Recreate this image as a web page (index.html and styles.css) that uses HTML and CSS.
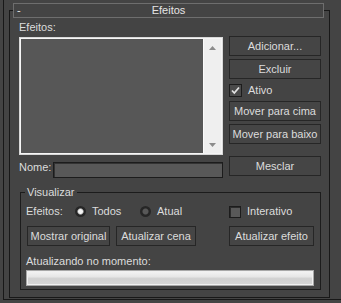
FILE: index.html
```html
<!DOCTYPE html>
<html lang="pt">
<head>
<meta charset="utf-8">
<title>Efeitos</title>
<link rel="stylesheet" href="styles.css">
</head>
<body>
<div class="panel">
  <div class="rollout">
    <div class="titlebar">
      <span class="collapse">-</span>
      <span class="title">Efeitos</span>
      <span></span>
    </div>

    <div class="top">
      <div class="left-col">
        <div class="text efeitos-label">Efeitos:</div>
        <div class="listbox">
          <div class="list-area"></div>
          <div class="scroll">
            <svg class="arrow" width="7" height="4" viewBox="0 0 7 4"><path d="M3.5 0 L7 4 L0 4 Z" fill="#8c8c8c"/></svg>
            <svg class="arrow" width="7" height="4" viewBox="0 0 7 4"><path d="M0 0 L7 0 L3.5 4 Z" fill="#8c8c8c"/></svg>
          </div>
        </div>
      </div>
      <div class="right-col">
        <div class="btn">Adicionar...</div>
        <div class="btn">Excluir</div>
        <div class="check-row">
          <span class="checkbox">
            <svg width="11" height="11" viewBox="0 0 11 11"><path d="M2 5.5 L4.3 8 L9 2.5" fill="none" stroke="#e2e2e2" stroke-width="1.8"/></svg>
          </span>
          <span class="text">Ativo</span>
        </div>
        <div class="btn">Mover para cima</div>
        <div class="btn">Mover para baixo</div>
      </div>
    </div>

    <div class="name-row">
      <div class="name-field">
        <span class="text name-label">Nome:</span>
        <span class="input"></span>
      </div>
      <div class="btn mesclar">Mesclar</div>
    </div>

    <div class="group">
      <div class="group-title">Visualizar</div>
      <div class="radio-row">
        <span class="text r-label">Efeitos:</span>
        <span class="radio-item todos"><span class="radio on"></span><span class="text">Todos</span></span>
        <span class="radio-item atual"><span class="radio"></span><span class="text">Atual</span></span>
        <span class="check-item"><span class="checkbox empty"></span><span class="text">Interativo</span></span>
      </div>
      <div class="btn-row">
        <div class="btn b-mostrar">Mostrar original</div>
        <div class="btn b-cena">Atualizar cena</div>
        <div class="btn b-efeito">Atualizar efeito</div>
      </div>
      <div class="text status">Atualizando no momento:</div>
      <div class="progress"></div>
    </div>
  </div>
</div>
</body>
</html>
```

FILE: styles.css
```css
html, body {
  margin: 0;
  padding: 0;
}

body {
  width: 341px;
  height: 303px;
  overflow: hidden;
  background: #444444;
  color: #dcdcdc;
  font-family: "Liberation Sans", Arial, sans-serif;
  font-size: 11px;
  line-height: 13px;
}

.panel {
  box-sizing: border-box;
  margin-left: 3px;
  height: 300px;
  padding-top: 10px;
  border-left: 1px solid #181818;
  border-bottom: 1px solid #181818;
}

.rollout {
  box-sizing: border-box;
  margin-left: 5px;
  width: 321px;
  height: 288px;
  border: 1px solid #181818;
  padding: 0 8px 0 9px;
}

.titlebar {
  box-sizing: border-box;
  margin: -8px 0 0 -6px;
  width: 311px;
  height: 15px;
  border: 1px solid #6e6e6e;
  background: #444444;
  display: grid;
  grid-template-columns: 1fr auto 1fr;
  color: #e4e4e4;
}

.collapse {
  padding-left: 3px;
}

.top {
  display: flex;
  gap: 6px;
}

.left-col {
  width: 204px;
}

.efeitos-label {
  margin-top: 3px;
}

.listbox {
  box-sizing: border-box;
  margin-top: 3px;
  height: 118px;
  display: flex;
  border: 1px solid #d8d8d8;
  box-shadow: inset 0 0 0 1px #f6f6f6;
  padding: 1px;
}

.list-area {
  flex: 1;
  background: #575757;
}

.scroll {
  width: 17px;
  background: #efefef;
  border-left: 1px solid #fafafa;
  display: flex;
  flex-direction: column;
  justify-content: space-between;
  align-items: center;
  padding: 7px 0 6px;
}

.arrow {
  display: block;
}

.right-col {
  width: 92px;
  margin-top: 18px;
  display: flex;
  flex-direction: column;
  gap: 3px;
}

.btn {
  box-sizing: border-box;
  height: 20px;
  border: 1px solid #262626;
  background: #454545;
  display: flex;
  align-items: center;
  justify-content: center;
  white-space: nowrap;
}

.check-row {
  height: 16px;
  display: flex;
  align-items: center;
  gap: 6px;
}

.checkbox {
  box-sizing: border-box;
  width: 13px;
  height: 13px;
  border: 1px solid #1c1c1c;
  background: #4a4a4a;
  display: flex;
  align-items: center;
  justify-content: center;
}

.checkbox svg {
  display: block;
}

.checkbox.empty {
  width: 12px;
  height: 12px;
  background: #595959;
  box-shadow: inset 1px 1px 0 #2c2c2c;
}

.name-row {
  display: flex;
  gap: 6px;
}

.name-field {
  width: 204px;
  margin-top: 7px;
  display: flex;
  align-items: flex-start;
}

.name-label {
  width: 34px;
  margin-top: -1px;
}

.input {
  box-sizing: border-box;
  flex: 1;
  height: 16px;
  border: 1px solid #1c1c1c;
  background: #585858;
  box-shadow: inset 1px 1px 0 #333333;
}

.mesclar {
  width: 92px;
  margin-top: 1px;
}

.group {
  box-sizing: border-box;
  margin: 14px 0 0 1px;
  width: 301px;
  border: 1px solid #1c1c1c;
  padding: 0 6px 3px 5px;
}

.group-title {
  width: max-content;
  margin: -7px 0 0 -1px;
  padding: 0 2px;
  background: #444444;
}

.radio-row {
  height: 13px;
  margin-top: 6px;
  display: flex;
  align-items: center;
}

.r-label {
  width: 49px;
}

.radio-item {
  display: flex;
  align-items: center;
  gap: 6px;
}

.todos {
  width: 65px;
}

.atual {
  width: 89px;
}

.radio {
  width: 11px;
  height: 11px;
  border-radius: 50%;
  background: radial-gradient(circle, #585858 0 2.5px, #262626 3.5px);
}

.radio.on {
  background: radial-gradient(circle, #f2f2f2 0 2px, #9a9a9a 2.8px, #262626 3.6px);
}

.check-item {
  display: flex;
  align-items: center;
  gap: 6px;
}

.btn-row {
  margin-top: 8px;
  display: flex;
  gap: 6px;
}

.b-mostrar {
  width: 83px;
  margin-left: 1px;
}

.b-cena {
  width: 80px;
}

.b-efeito {
  width: 85px;
  margin-left: auto;
}

.status {
  margin-top: 9px;
}

.progress {
  box-sizing: border-box;
  margin-top: 2px;
  height: 16px;
  border: 1px solid #a8a8a8;
  background: linear-gradient(#f4f4f4 0, #e6e6e6 40%, #d0d0d0 55%, #d6d6d6 100%);
  box-shadow: inset 0 0 0 1px #f0f0f0;
}
```
